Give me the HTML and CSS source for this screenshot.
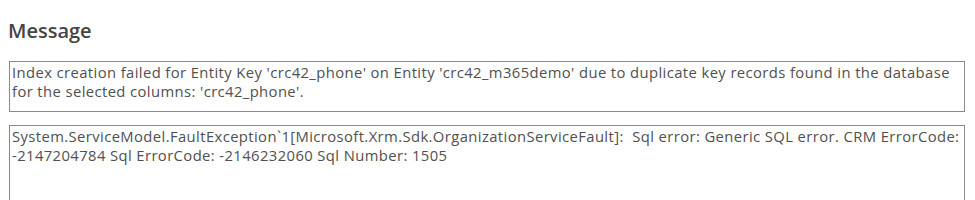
FILE: index.html
```html
<!doctype html>
<html lang="en">
<head>
	<meta charset="UTF-8">
	<title>Message</title>
	<link rel="stylesheet" href="styles.css">
</head>
<body>
	<div class="panel">
		<h2 class="title">Message</h2>
		<div class="box box-short">Index creation failed for Entity Key 'crc42_phone' on Entity 'crc42_m365demo' due to duplicate key records found in the database for the selected columns: 'crc42_phone'.</div>
		<div class="box box-long">System.ServiceModel.FaultException`1[Microsoft.Xrm.Sdk.OrganizationServiceFault]:&nbsp; Sql error: Generic SQL error. CRM ErrorCode: -2147204784 Sql ErrorCode: -2146232060 Sql Number: 1505</div>
	</div>
</body>
</html>
```

FILE: styles.css
```css
*{padding:0;margin:0;box-sizing:border-box;}
html,body{width:100%;height:100%;background:#fff;}
body{
	font-family:"Open Sans","Noto Sans",sans-serif;
	color:#505050;
	overflow:hidden;
}
.panel{
	padding:18px 10px 0 9px;
	display:flex;
	flex-direction:column;
}
.title{
	font-size:20px;
	font-weight:600;
	color:#444;
	line-height:26px;
	margin-left:-1px;
	margin-bottom:17px;
}
.box{
	border:1px solid #8a8a8a;
	font-size:14.8px;
	line-height:19px;
	padding:1px 2px;
	letter-spacing:0.4px;
}
.box-short{height:51px;margin-bottom:13px;}
.box-long{height:76px;}
```
